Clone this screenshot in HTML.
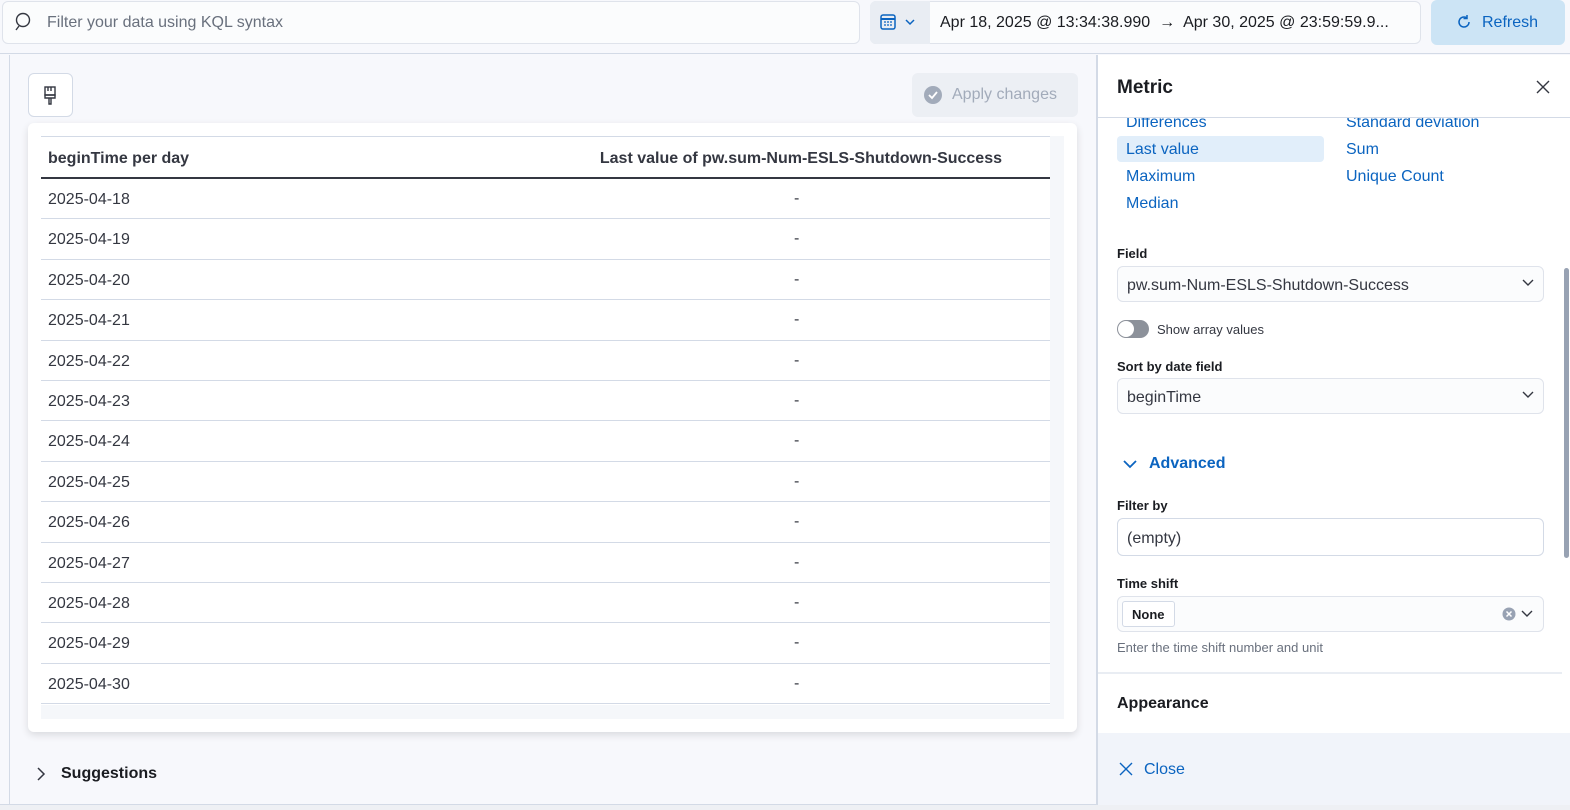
<!DOCTYPE html>
<html><head><style>
*{box-sizing:border-box;margin:0;padding:0}
body{width:1570px;height:810px;overflow:hidden;background:#f7f8fc;font-family:"Liberation Sans",sans-serif;position:relative;color:#343741}
.a{position:absolute}
.lnk{color:#0b64c0;font-size:16px}
.lbl{font-size:13px;font-weight:bold;color:#1a1c21}
.inp{background:#fbfcfd;border:1px solid #dfe3eb;border-radius:6px;font-size:16px;color:#343741;padding-left:9px;display:flex;align-items:center}
.row{position:absolute;left:41px;width:1009px;height:40.4px;border-bottom:1px solid #d3dae6;font-size:16px;color:#343741}
</style></head><body>
<div class="a" style="left:0;top:0;width:1570px;height:54px;background:#f7f8fc;border-bottom:1px solid #d3dae6"></div>
<div class="a inp" style="left:2px;top:1px;width:858px;height:43px;background:#fbfcfd;padding-left:44px;color:#69707d;font-size:16px">Filter your data using KQL syntax</div>
<svg class="a" style="left:14px;top:12px" width="20" height="20" viewBox="0 0 20 20"><circle cx="9" cy="8" r="6.5" fill="none" stroke="#343741" stroke-width="1.4"/><path d="M5 14 L2 18" stroke="#343741" stroke-width="1.4"/></svg>
<div class="a" style="left:870px;top:1px;width:551px;height:43px;border:1px solid #dfe3eb;border-radius:6px;background:#fbfcfd"></div>
<div class="a" style="left:870px;top:1px;width:60px;height:43px;background:#e9edf3;border-radius:6px 0 0 6px"></div>
<svg class="a" style="left:880px;top:13px" width="40" height="18" viewBox="0 0 40 18"><rect x="1" y="2" width="14" height="14" rx="2" fill="none" stroke="#0b64c0" stroke-width="1.5"/><path d="M1 6h14" stroke="#0b64c0" stroke-width="2"/><path d="M4 9h2M7 9h2M10 9h2M4 12h2M7 12h2M10 12h2" stroke="#0b64c0" stroke-width="1.3"/><path d="M26 7l4 4 4-4" fill="none" stroke="#0b64c0" stroke-width="1.5"/></svg>
<div class="a" style="left:940px;top:14px;font-size:16px;color:#1a1c21;white-space:nowrap">Apr 18, 2025 @ 13:34:38.990 &nbsp;→&nbsp; Apr 30, 2025 @ 23:59:59.9...</div>
<div class="a" style="left:1431px;top:0;width:134px;height:45px;background:#cce4f5;border-radius:6px;color:#0b64c0;font-size:16px;padding:14px 0 0 51px">Refresh</div>
<svg class="a" style="left:1456px;top:14px" width="16" height="16" viewBox="0 0 16 16"><path d="M13 8a5 5 0 1 1-2-4" fill="none" stroke="#0b64c0" stroke-width="1.5"/><path d="M11 1v3.5h-3.5" fill="none" stroke="#0b64c0" stroke-width="1.5"/></svg>
<div class="a" style="left:9px;top:55px;width:1px;height:750px;background:#d3dae6"></div>
<div class="a" style="left:0;top:804px;width:1570px;height:6px;background:#eef0f4;border-top:1px solid #d3dae6"></div>
<div class="a" style="left:28px;top:73px;width:45px;height:44px;border:1px solid #d3dae6;border-radius:6px;background:#fff"></div>
<svg class="a" style="left:42px;top:86px" width="16" height="20" viewBox="0 0 16 20"><rect x="3" y="1" width="10" height="8" fill="none" stroke="#343741" stroke-width="1.4"/><path d="M6 1v4M9 1v4M3 9h10v3H3zM7 12v6h2v-6" fill="none" stroke="#343741" stroke-width="1.4"/></svg>
<div class="a" style="left:912px;top:73px;width:166px;height:44px;background:#eceff4;border-radius:6px;color:#a2abba;font-size:16px;padding:13px 0 0 40px">Apply changes</div>
<svg class="a" style="left:924px;top:86px" width="18" height="18" viewBox="0 0 18 18"><circle cx="9" cy="9" r="9" fill="#a2abba"/><path d="M5 9l3 3 5-6" fill="none" stroke="#fff" stroke-width="1.8"/></svg>
<div class="a" style="left:28px;top:123px;width:1049px;height:609px;background:#fff;border-radius:6px;box-shadow:0 3px 8px rgba(0,0,0,.12)"></div>
<div class="a" style="left:1050px;top:136px;width:14px;height:582px;background:#f5f7fa"></div>
<div class="a" style="left:41px;top:705px;width:1023px;height:14px;background:#f5f7fa"></div>
<div class="a" style="left:41px;top:136px;width:1009px;height:1px;background:#d3dae6"></div>
<div class="a" style="left:41px;top:137px;width:1009px;height:42px;border-bottom:2px solid #343741;font-size:16px;font-weight:bold;color:#343741">
<span class="a" style="left:7px;top:13px">beginTime per day</span><span class="a" style="right:48px;top:13px">Last value of pw.sum-Num-ESLS-Shutdown-Success</span></div>
<div class="row" style="top:179px"><span class="a" style="left:7px;top:12px">2025-04-18</span><span class="a" style="left:753px;top:11px">-</span></div>
<div class="row" style="top:219.4px"><span class="a" style="left:7px;top:12px">2025-04-19</span><span class="a" style="left:753px;top:11px">-</span></div>
<div class="row" style="top:259.8px"><span class="a" style="left:7px;top:12px">2025-04-20</span><span class="a" style="left:753px;top:11px">-</span></div>
<div class="row" style="top:300.2px"><span class="a" style="left:7px;top:12px">2025-04-21</span><span class="a" style="left:753px;top:11px">-</span></div>
<div class="row" style="top:340.6px"><span class="a" style="left:7px;top:12px">2025-04-22</span><span class="a" style="left:753px;top:11px">-</span></div>
<div class="row" style="top:381px"><span class="a" style="left:7px;top:12px">2025-04-23</span><span class="a" style="left:753px;top:11px">-</span></div>
<div class="row" style="top:421.4px"><span class="a" style="left:7px;top:12px">2025-04-24</span><span class="a" style="left:753px;top:11px">-</span></div>
<div class="row" style="top:461.8px"><span class="a" style="left:7px;top:12px">2025-04-25</span><span class="a" style="left:753px;top:11px">-</span></div>
<div class="row" style="top:502.2px"><span class="a" style="left:7px;top:12px">2025-04-26</span><span class="a" style="left:753px;top:11px">-</span></div>
<div class="row" style="top:542.6px"><span class="a" style="left:7px;top:12px">2025-04-27</span><span class="a" style="left:753px;top:11px">-</span></div>
<div class="row" style="top:583px"><span class="a" style="left:7px;top:12px">2025-04-28</span><span class="a" style="left:753px;top:11px">-</span></div>
<div class="row" style="top:623.4px"><span class="a" style="left:7px;top:12px">2025-04-29</span><span class="a" style="left:753px;top:11px">-</span></div>
<div class="row" style="top:663.8px"><span class="a" style="left:7px;top:12px">2025-04-30</span><span class="a" style="left:753px;top:11px">-</span></div>
<svg class="a" style="left:35px;top:766px" width="12" height="16" viewBox="0 0 12 16"><path d="M3 2l6 6-6 6" fill="none" stroke="#343741" stroke-width="1.5"/></svg>
<div class="a" style="left:61px;top:765px;font-size:16px;font-weight:bold;color:#1a1c21">Suggestions</div>
<div class="a" style="left:1096px;top:55px;width:474px;height:750px;background:#fff;border-left:2px solid #d3dae6;overflow:hidden">
 <div class="a" style="left:0;top:0;width:474px;height:63px;border-bottom:1px solid #d3dae6;background:#fff;z-index:2"></div>
 <div class="a" style="left:19px;top:22px;font-size:19px;font-weight:bold;color:#1a1c21;z-index:3">Metric</div>
 <svg class="a" style="left:438px;top:25px;z-index:3" width="14" height="14" viewBox="0 0 14 14"><path d="M1 1l12 12M13 1L1 13" stroke="#343741" stroke-width="1.4"/></svg>
 <div class="a lnk" style="left:28px;top:59px">Differences</div>
 <div class="a lnk" style="left:248px;top:59px">Standard deviation</div>
 <div class="a" style="left:19px;top:81px;width:207px;height:26px;background:#e1eefa;border-radius:4px"></div>
 <div class="a lnk" style="left:28px;top:86px">Last value</div>
 <div class="a lnk" style="left:248px;top:86px">Sum</div>
 <div class="a lnk" style="left:28px;top:113px">Maximum</div>
 <div class="a lnk" style="left:248px;top:113px">Unique Count</div>
 <div class="a lnk" style="left:28px;top:140px">Median</div>
 <div class="a lbl" style="left:19px;top:191px">Field</div>
 <div class="a inp" style="left:19px;top:211px;width:427px;height:36px;padding-top:3px">pw.sum-Num-ESLS-Shutdown-Success</div>
 <svg class="a" style="left:424px;top:223px" width="12" height="10" viewBox="0 0 12 10"><path d="M1 2l5 5 5-5" fill="none" stroke="#343741" stroke-width="1.4"/></svg>
 <div class="a" style="left:19px;top:265px;width:32px;height:18px;border-radius:9px;background:#8c919a"></div>
 <div class="a" style="left:20px;top:266px;width:16px;height:16px;border-radius:8px;background:#fff"></div>
 <div class="a" style="left:59px;top:267px;font-size:13px;color:#343741">Show array values</div>
 <div class="a lbl" style="left:19px;top:304px">Sort by date field</div>
 <div class="a inp" style="left:19px;top:323px;width:427px;height:36px;padding-top:3px">beginTime</div>
 <svg class="a" style="left:424px;top:335px" width="12" height="10" viewBox="0 0 12 10"><path d="M1 2l5 5 5-5" fill="none" stroke="#343741" stroke-width="1.4"/></svg>
 <svg class="a" style="left:24px;top:403px" width="16" height="12" viewBox="0 0 16 12"><path d="M2 3l6 6 6-6" fill="none" stroke="#0b64c0" stroke-width="1.8"/></svg>
 <div class="a" style="left:51px;top:400px;font-size:16px;font-weight:bold;color:#0b64c0">Advanced</div>
 <div class="a lbl" style="left:19px;top:443px">Filter by</div>
 <div class="a inp" style="left:19px;top:463px;width:427px;height:38px;background:#fff;border-color:#d3dae6;padding-top:3px">(empty)</div>
 <div class="a lbl" style="left:19px;top:521px">Time shift</div>
 <div class="a inp" style="left:19px;top:541px;width:427px;height:36px;padding-left:4px"><span style="border:1px solid #d3dae6;border-radius:3px;background:#fff;font-size:13px;font-weight:bold;padding:5px 9px 4px;color:#1a1c21">None</span></div>
 <svg class="a" style="left:404px;top:551px" width="34" height="16" viewBox="0 0 34 16"><circle cx="7" cy="8" r="6.5" fill="#98a2b3"/><path d="M4.5 5.5l5 5M9.5 5.5l-5 5" stroke="#fff" stroke-width="1.5"/><path d="M20 5l5 5 5-5" fill="none" stroke="#343741" stroke-width="1.4"/></svg>
 <div class="a" style="left:19px;top:585px;font-size:13px;color:#69707d">Enter the time shift number and unit</div>
 <div class="a" style="left:0;top:617px;width:464px;height:2px;background:#e9edf3"></div>
 <div class="a" style="left:19px;top:640px;font-size:16px;font-weight:bold;color:#1a1c21">Appearance</div>
 <div class="a" style="left:466px;top:213px;width:5px;height:290px;background:#98a2b3;border-radius:3px"></div>
 <div class="a" style="left:0;top:678px;width:474px;height:72px;background:#f1f4fa"></div>
 <svg class="a" style="left:21px;top:707px" width="14" height="14" viewBox="0 0 14 14"><path d="M1 1l12 12M13 1L1 13" stroke="#0b64c0" stroke-width="1.4"/></svg>
 <div class="a" style="left:46px;top:706px;font-size:16px;color:#0b64c0">Close</div>
</div>
</body></html>
